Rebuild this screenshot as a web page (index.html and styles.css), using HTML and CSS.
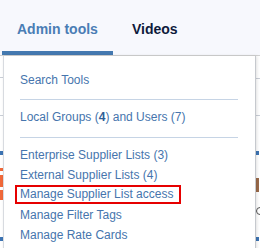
FILE: index.html
```html
<!DOCTYPE html>
<html>
<head>
    <title>Admin tools</title>
    <link rel="stylesheet" href="styles.css">
</head>
<body>
<header class="tabs">
    <a class="tab active" href="#">Admin tools</a>
    <a class="tab" href="#">Videos</a>
</header>

<div class="page">
    <div class="edge left">
        <span class="tick t1"></span>
        <span class="tick t2"></span>
        <span class="mark blue m1"></span>
        <span class="mark orange m2"></span>
        <span class="mark orange m3"></span>
        <span class="mark orange m4"></span>
        <span class="mark blue m5"></span>
    </div>
    <div class="edge right">
        <span class="tick t1"></span>
        <span class="tick t2"></span>
        <span class="mark blue m1"></span>
        <span class="mark brown r2"></span>
        <span class="ring"></span>
        <span class="mark blue r5"></span>
    </div>

    <div class="dropdown">
        <ul>
            <li><a href="#">Search Tools</a></li>
        </ul>
        <hr>
        <ul>
            <li><a href="#">Local Groups (<b>4</b>) and Users (7)</a></li>
        </ul>
        <hr class="last">
        <ul>
            <li><a href="#">Enterprise Supplier Lists (3)</a></li>
            <li><a href="#">External Supplier Lists (4)</a></li>
            <li><a class="boxed" href="#">Manage Supplier List access</a></li>
            <li><a href="#">Manage Filter Tags</a></li>
            <li><a href="#">Manage Rate Cards</a></li>
        </ul>
    </div>
</div>
</body>
</html>
```

FILE: styles.css
```css
* {
    margin: 0;
    padding: 0;
    box-sizing: border-box;
}
body {
    font-family: "Liberation Sans", Arial, sans-serif;
    background-color: #fff;
    overflow: hidden;
}
.tabs {
    display: flex;
    height: 56px;
    padding-left: 2px;
    background-color: #f7f8fd;
    border-bottom: 1px solid #d2d2d2;
}
.tab {
    display: block;
    height: 55px;
    padding-top: 21px;
    font-size: 14px;
    font-weight: bold;
    line-height: 16px;
    color: #0e1a3c;
    text-decoration: none;
}
.tab.active {
    width: 111px;
    padding-left: 15px;
    color: #4a7db5;
    border-bottom: 4px solid #4479b0;
}
.tab + .tab {
    padding-left: 19px;
}

.page {
    position: relative;
    display: flex;
    justify-content: space-between;
    height: 192px;
}
.edge {
    display: flex;
    flex-direction: column;
    width: 4px;
}
.tick {
    display: block;
    height: 1px;
    background-color: #c9ced6;
}
.left .t1 { margin-top: 21px; }
.left .t2 { margin-top: 37px; }
.right .t1 { margin-top: 22px; }
.right .t2 { margin-top: 36px; }
.mark {
    display: block;
    width: 3px;
}
.blue { background-color: #3d74b3; height: 4px; }
.orange { background-color: #f0693a; }
.brown { background-color: #9a6a4a; }
.m1 { margin-top: 35px; }
.m2 { margin-top: 13px; height: 3px; }
.m3 { margin-top: 4px; height: 12px; }
.m4 { margin-top: 3px; height: 10px; }
.m5 { margin-top: 37px; }
.r2 { margin-top: 23px; height: 14px; }
.ring {
    display: block;
    width: 8px;
    height: 8px;
    margin-top: 15px;
    border: 1px solid #555;
    border-radius: 50%;
}
.r5 { margin-top: 22px; }

.dropdown {
    position: absolute;
    top: 0;
    left: 3px;
    width: 253px;
    height: 200px;
    padding: 14px 0 0 16px;
    background-color: #fff;
    border-left: 1px solid #d8dbe0;
    border-right: 1px solid #c6c9ce;
    box-shadow: 1px 0 3px rgba(0, 0, 0, 0.12);
}
ul {
    list-style-type: none;
}
li {
    height: 20px;
    font-size: 12px;
    line-height: 20px;
}
li a {
    color: #4675ad;
    text-decoration: none;
}
li b {
    color: #2e5d97;
}
hr {
    width: 218px;
    margin: 9px 0 7px 0;
    border: none;
    border-top: 1px solid #c6d4e5;
}
hr.last {
    margin-top: 10px;
}
.boxed {
    display: inline-block;
    margin-left: -5px;
    padding: 0 6px 0 3px;
    line-height: 15px;
    vertical-align: top;
    border: 2px solid #e60000;
}
```
